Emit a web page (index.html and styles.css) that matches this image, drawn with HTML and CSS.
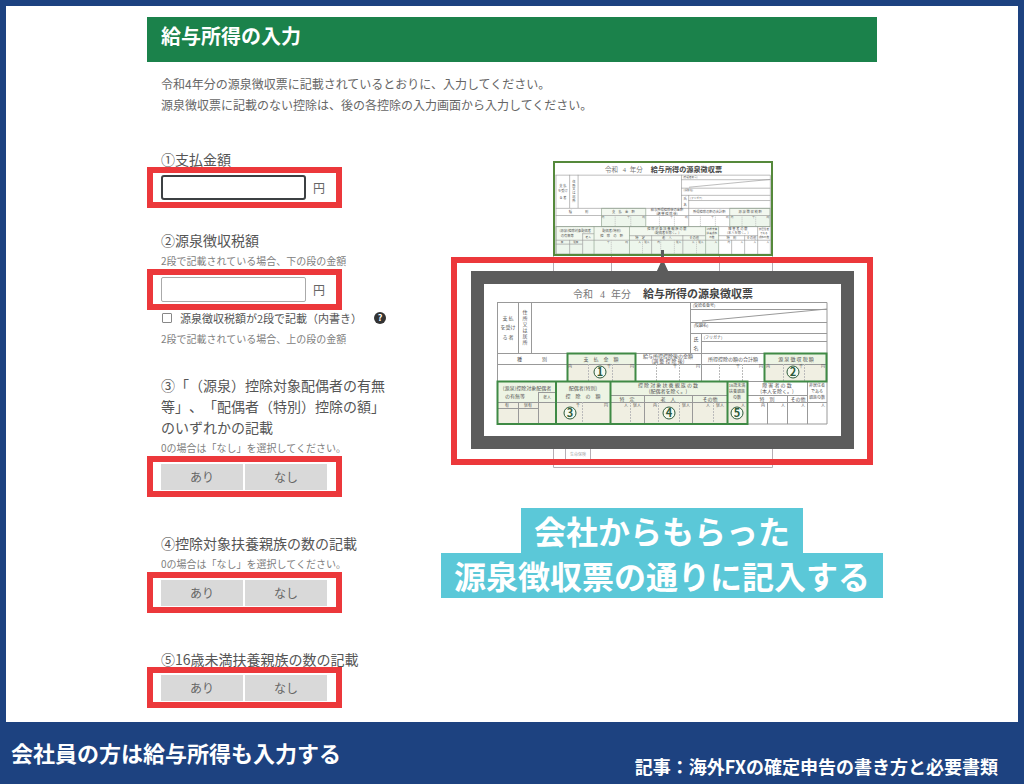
FILE: index.html
```html
<!DOCTYPE html>
<html lang="ja">
	<head>
		<meta charset="UTF-8">
		<title>給与所得の入力</title>
		<link rel="stylesheet" href="styles.css">
	</head>
	<body>
		<main class="page">
			<div class="container">
				<h1 class="title">給与所得の入力</h1>
				<p class="lead">
					令和4年分の源泉徴収票に記載されているとおりに、入力してください。<br>
					源泉徴収票に記載のない控除は、後の各控除の入力画面から入力してください。
				</p>

				<div class="columns">
					<form class="form">
						<div class="field">
							<label class="label" for="pay">①支払金額</label>
							<div class="mark">
								<input class="money active" type="text" id="pay">
								<span class="yen">円</span>
							</div>
						</div>

						<div class="field">
							<label class="label" for="tax">②源泉徴収税額</label>
							<p class="note">2段で記載されている場合、下の段の金額</p>
							<div class="mark">
								<input class="money" type="text" id="tax">
								<span class="yen">円</span>
							</div>
							<div class="check">
								<input type="checkbox" id="two">
								<label for="two">源泉徴収税額が2段で記載（内書き）</label>
								<button class="help" type="button">?</button>
							</div>
							<p class="note">2段で記載されている場合、上の段の金額</p>
						</div>

						<div class="field spouse" role="group" aria-labelledby="l3">
							<p class="label long" id="l3">③「（源泉）控除対象配偶者の有無等」、「配偶者（特別）控除の額」のいずれかの記載</p>
							<p class="note">0の場合は「なし」を選択してください。</p>
							<div class="mark">
								<button class="choice" type="button">あり</button>
								<button class="choice" type="button">なし</button>
							</div>
						</div>

						<div class="field family" role="group" aria-labelledby="l4">
							<p class="label" id="l4">④控除対象扶養親族の数の記載</p>
							<p class="note">0の場合は「なし」を選択してください。</p>
							<div class="mark">
								<button class="choice" type="button">あり</button>
								<button class="choice" type="button">なし</button>
							</div>
						</div>

						<div class="field family" role="group" aria-labelledby="l5">
							<p class="label" id="l5">⑤16歳未満扶養親族の数の記載</p>
							<div class="mark">
								<button class="choice" type="button">あり</button>
								<button class="choice" type="button">なし</button>
							</div>
						</div>
					</form>

					<div class="guide">
						<svg class="sheet" viewBox="450 160 424 310">
							<!-- 源泉徴収票 -->
							<symbol id="slip" viewBox="496 284 332 141">
								<rect x="497" y="284" width="330" height="140" fill="#fff"/>
								<text class="era" x="573" y="298">令和</text>
								<text class="era" x="600" y="298">4</text>
								<text class="era" x="611" y="298">年分</text>
								<text class="name" x="643" y="298">給与所得の源泉徴収票</text>

								<path class="fill" d="M567 353h69v28h-69zM765 353h62v28h-62zM497 381h251v43h-251z"/>
								<path class="fill2" d="M567 364h69v17h-69zM765 364h62v17h-62zM497 403h251v21h-251z"/>
								<path class="line" d="M497 302.5H827V424H497.5V302M518.500 302V353M531.500 302V353M690.500 302V353M690 309.500H827M690 322.500H827M690 333.500H827M701 341.500H827M701.500 333V353M702 321L827 309M497 353.500H827M497 364.500H827M497 381.500H827M701.500 353V381M538.500 392V424M538 392.500H556M497 402.500H827M497 408.500H538M518.500 402V424M610 395.500H727M747 395.500H808M644.500 395V424M692.500 395V424M787.500 395V424M807.500 381V424M767.500 402V424"/>
								<path class="dash" d="M588.500 364V381M612.500 364V381M656.500 364V381M679.500 364V381M719.500 364V381M742.500 364V381M783.500 364V381M804.500 364V381M582.500 402V424M630.500 402V424M658.500 402V424M679.500 402V424M713.500 402V424"/>
								<path class="green" d="M567.500 353.500h68v28h-68zM764.500 353.500h62v28h-62zM497.500 381.500h250v42.500h-250zM556 381V424M610.500 381V424M727.500 381V424"/>

								<g class="small">
									<text x="508" y="320">支 払</text>
									<text x="508" y="329">を受け</text>
									<text x="508" y="339">る 者</text>
									<text x="525" y="314">住</text>
									<text x="525" y="320">所</text>
									<text x="525" y="326">又</text>
									<text x="525" y="332">は</text>
									<text x="525" y="338">居</text>
									<text x="525" y="344">所</text>
									<text x="696" y="341">氏</text>
									<text x="696" y="350">名</text>
									<text x="532" y="361">種　　　　別</text>
									<text x="601" y="361">支　払　金　額</text>
									<text x="796" y="361">源 泉 徴 収 税 額</text>
									<text x="668" y="358">給与所得控除後の金額</text>
									<text x="668" y="363">(調 整 控 除 後)</text>
									<text x="733" y="361">所得控除の額の合計額</text>
									<text x="527" y="390">(源泉)控除対象配偶者</text>
									<text x="515" y="398">の有無等</text>
									<text x="583" y="390">配偶者(特別)</text>
									<text x="583" y="398">控　除　の　額</text>
									<text x="668" y="387">控 除 対 象 扶 養 親 族 の 数</text>
									<text x="668" y="393">(配偶者を除く。)</text>
									<text x="777" y="387">障 害 者 の 数</text>
									<text x="777" y="393">(本人を除く。)</text>
									<text x="627" y="401">特　定</text>
									<text x="668" y="401">老　人</text>
									<text x="710" y="401">その他</text>
									<text x="767" y="401">特　別</text>
									<text x="798" y="401">その他</text>
								</g>
								<g class="tiny">
									<text x="704" y="307">(受給者番号)</text>
									<text x="701" y="327">(役職名)</text>
									<text x="713" y="339">(フリガナ)</text>
									<text x="547" y="399">老人</text>
									<text x="507" y="407">有</text>
									<text x="528" y="407">従有</text>
									<text x="737" y="387">16歳未満</text>
									<text x="737" y="393">扶養親族</text>
									<text x="737" y="399">の数</text>
									<text x="817" y="387">非居住者</text>
									<text x="817" y="393">である</text>
									<text x="817" y="399">親族の数</text>
									<text x="570" y="368">内</text>
									<text x="609" y="368">千</text>
									<text x="632" y="368">円</text>
									<text x="675" y="368">千</text>
									<text x="698" y="368">円</text>
									<text x="738" y="368">千</text>
									<text x="761" y="368">円</text>
									<text x="768" y="368">内</text>
									<text x="801" y="368">千</text>
									<text x="823" y="368">円</text>
									<text x="578" y="407">千</text>
									<text x="606" y="407">円</text>
									<text x="626" y="407">人</text>
									<text x="637" y="407">従人</text>
									<text x="655" y="407">内</text>
									<text x="686" y="407">従人</text>
									<text x="708" y="407">人</text>
									<text x="720" y="407">従人</text>
									<text x="743" y="407">人</text>
									<text x="763" y="407">内</text>
									<text x="783" y="407">人</text>
									<text x="803" y="407">人</text>
									<text x="823" y="407">人</text>
								</g>
							</symbol>

							<!-- 後ろの票 -->
							<path class="back" d="M553.500 255V467.500H772.500V255M611.500 255V271M719.500 255V271M553 459.500H772M565.500 449V459M590.500 449V459"/>
							<text class="tiny back-text" x="578" y="456">生命保険</text>
							<use class="behind" href="#slip" x="555" y="163" width="216" height="92"/>
							<rect class="outline" x="554" y="162" width="218" height="93"/>

							<!-- 拡大した票 -->
							<path fill="#5c5c5c" d="M661 250h3v12l5 11h-13l5-11z"/>
							<rect class="frame" x="477.500" y="277.500" width="370" height="165"/>
							<use href="#slip" x="496" y="284" width="332" height="141"/>
							<g class="num">
								<circle cx="600" cy="372" r="6"/><text x="600" y="376">1</text>
								<circle cx="793" cy="372" r="6"/><text x="793" y="376">2</text>
								<circle cx="570" cy="413" r="6"/><text x="570" y="417">3</text>
								<circle cx="669" cy="413" r="6"/><text x="669" y="417">4</text>
								<circle cx="737" cy="413" r="6"/><text x="737" y="417">5</text>
							</g>
							<rect class="red" x="454" y="260" width="416" height="202"/>
						</svg>

						<p class="caption">
							<span>会社からもらった</span>
							<span>源泉徴収票の通りに記入する</span>
						</p>
					</div>
				</div>
			</div>
		</main>

		<footer class="footer">
			<p class="summary">会社員の方は給与所得も入力する</p>
			<p class="article">記事：海外FXの確定申告の書き方と必要書類</p>
		</footer>
	</body>
</html>
```
FILE: styles.css
```css
*{
	box-sizing: border-box;
}

body{
	margin: 0;
	min-height: 100vh;
	background-color: #1d4280;
	color: #666;
	font-family: "Noto Sans CJK JP", sans-serif;
	font-size: 12px;
	text-spacing-trim: space-all;
}

h1, p{
	margin: 0;
}

input, button{
	font-family: inherit;
	margin: 0;
	padding: 0;
}

.page{
	margin: 0 6px;
	padding: 11px 0 14px;
	border-top: solid 6px #1d4280;
	background-color: #fff;
}

.container{
	max-width: 730px;
	margin: 0 auto;
}

.title{
	height: 45px;
	padding: 0 14px;
	line-height: 38px;
	font-size: 20px;
	color: #fff;
	background-color: #1b824b;
}

.lead{
	padding: 11px 14px 0;
	line-height: 21px;
}

.columns{
	display: grid;
	grid-template-columns: 290px minmax(0, 1fr);
	margin: 36px -10px 0 0;
}

/* 入力欄 */
.field{
	margin-bottom: 24px;
}

.spouse{
	margin-top: 28px;
}

.family{
	margin-top: 38px;
}

.field:last-child{
	margin-bottom: 0;
}

.label{
	display: block;
	padding-left: 14px;
	font-size: 14px;
	line-height: 16px;
	color: #555;
}

.long{
	width: 242px;
	line-height: 21px;
}

.note{
	margin-top: 5px;
	padding-left: 14px;
	font-size: 10px;
	line-height: 16px;
	color: #808080;
}

.long + .note{
	margin-top: 2px;
}

.mark{
	display: flex;
	align-items: center;
	gap: 2px;
	width: 195px;
	height: 41px;
	padding: 0 8px;
	border: solid 6px #ec383b;
}

.money{
	width: 145px;
	height: 25px;
	border: solid 1px #aaa;
	border-radius: 2px;
	background-color: #fff;
}

.active{
	border: solid 2px #3c4043;
	border-radius: 3px;
}

.yen{
	padding-left: 5px;
}

.check{
	display: flex;
	align-items: center;
	height: 16px;
	padding-left: 15px;
	font-size: 11px;
	white-space: nowrap;
}

.check input{
	appearance: none;
	width: 10px;
	height: 10px;
	margin-right: 8px;
	border: solid 1px #888;
	border-radius: 1px;
}

.check label{
	color: #555;
}

.help{
	width: 12px;
	height: 12px;
	margin-left: 12px;
	border: 0;
	border-radius: 50%;
	font-size: 9px;
	font-weight: bold;
	line-height: 12px;
	color: #fff;
	background-color: #333;
}

.choice{
	width: 82px;
	height: 26px;
	border: 0;
	font-size: 12px;
	color: #666;
	background-color: #d9d9d9;
}

/* 源泉徴収票の図 */
.guide{
	display: flex;
	flex-direction: column;
	align-items: center;
	padding-top: 9px;
}

.sheet{
	--edge: #3f8a45;
	--edge-width: 2px;
	--head: #edf4e4;
	--cell: #f0efe2;
	width: 100%;
	max-width: 424px;
}

.behind{
	--edge: #8fa28f;
	--edge-width: 1px;
	--head: #f2f8ef;
	--cell: #edf6ec;
}

.era{
	font-size: 10px;
	font-family: "Liberation Serif", "Noto Sans CJK JP", serif;
	fill: #777;
}

.name{
	font-size: 11px;
	font-weight: bold;
	fill: #444;
}

.fill{
	fill: var(--head);
}

.fill2{
	fill: var(--cell);
}

.line, .back, .dash{
	fill: none;
	stroke: #999;
}

.dash{
	stroke: #bbb;
	stroke-dasharray: 2 1;
}

.back{
	stroke: #b5aeb5;
}

.green{
	fill: none;
	stroke: var(--edge);
	stroke-width: var(--edge-width);
}

.tiny, .small{
	font-size: 4px;
	text-anchor: middle;
	fill: #555;
}

.small{
	font-size: 5px;
}

.back-text{
	fill: #a8a8a8;
}

.outline{
	fill: none;
	stroke: #55893b;
	stroke-width: 2;
}

.frame{
	fill: #fff;
	stroke: #5c5c5c;
	stroke-width: 13;
}

.num circle{
	fill: #f5faf0;
	stroke: #2d5a3a;
}

.num text{
	font-size: 11px;
	font-weight: bold;
	text-anchor: middle;
	fill: #2d5a3a;
}

.red{
	fill: none;
	stroke: #ec383b;
	stroke-width: 6;
}

.caption{
	display: flex;
	flex-direction: column;
	align-items: center;
	margin-top: 38px;
	font-size: 32px;
	font-weight: bold;
	line-height: 45px;
	color: #fff;
}

.caption span{
	padding: 0 13px;
	background-color: #5bc8d8;
}

/* フッター */
.footer{
	display: flex;
	flex-wrap: wrap;
	justify-content: space-between;
	padding: 14px 26px 0 11px;
	font-weight: bold;
	color: #fff;
}

.summary{
	font-size: 22px;
	line-height: 32px;
}

.article{
	padding-top: 18px;
	font-size: 18px;
	line-height: 24px;
}
```
